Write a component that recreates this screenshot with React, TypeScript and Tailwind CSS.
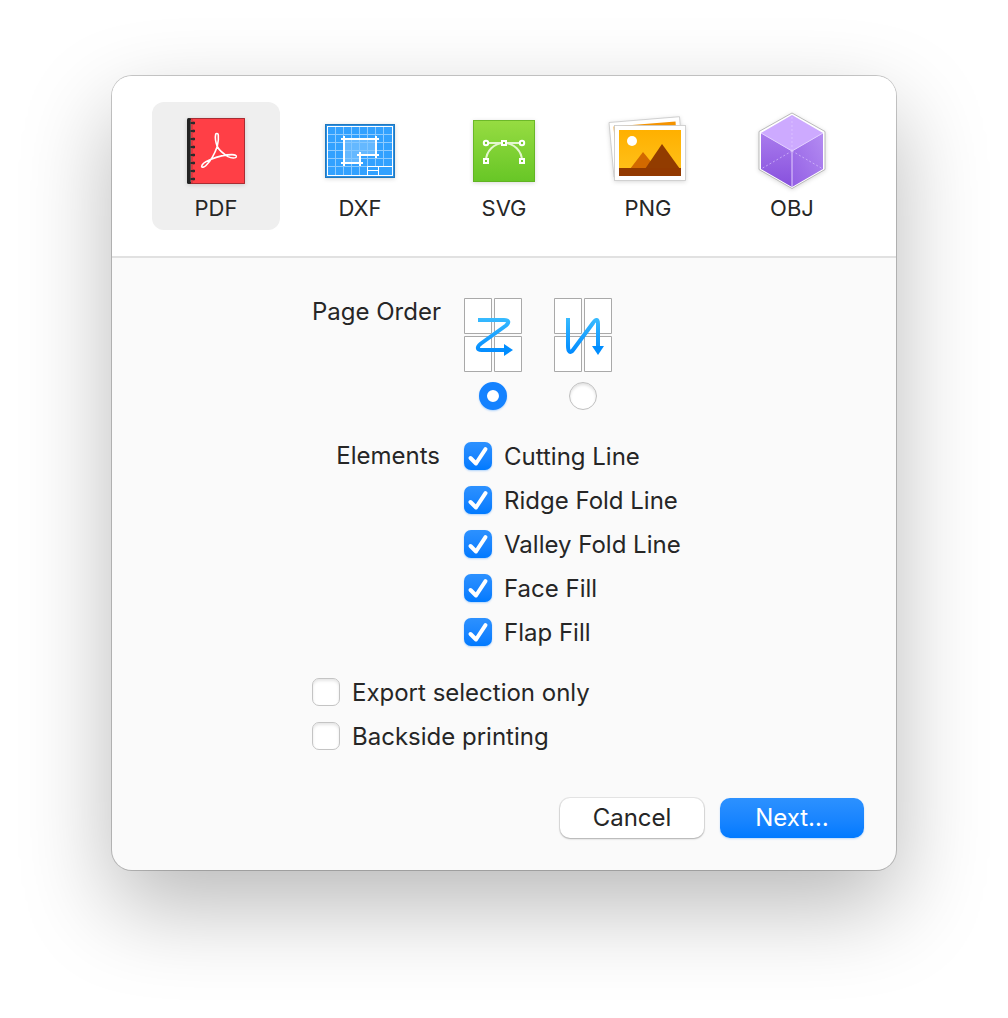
import { useState } from "react";
import type { ReactNode } from "react";

function PdfIcon() {
  const rings = [0, 1, 2, 3, 4, 5, 6, 7];
  return (
    <svg viewBox="176 110 80 80" className="size-20 drop-shadow-sm" aria-hidden="true">
      <rect x="190" y="118" width="55" height="66" fill="#ff3f46" />
      <path d="M190 118.5h54.500v65H190" fill="none" stroke="#a82d33" />
      <path d="M192 119v64" stroke="#b5363b" />
      <rect x="187" y="118" width="4" height="66" rx="1.500" fill="#222" />
      <path d="M190.500 120v62" stroke="#666" strokeWidth=".7" />
      {rings.map((i) => (
        <g key={i}>
          <path d={`M193.500 ${121 + i * 8}v4`} stroke="#b0353a" strokeWidth="2" />
          <path d={`M190.500 ${123 + i * 8}h4.500`} stroke="#2b2b2b" strokeWidth="2" />
        </g>
      ))}
      <path
        d="M217.200 146.500C215.800 142.500 214.900 137.500 215.700 134.300C216 133.100 218 133.100 218.300 134.800C218.700 138 218.300 142.500 217.200 146.500C215 153 210 161.500 206 165.500C204 167.500 201.900 167.600 201.700 166.500C201.500 164.500 205.500 161.500 210.500 159.400C217 156.800 226 154.700 232 154.600C235 154.600 236.800 155.700 236.300 157C235.700 158.400 231.500 158.400 228 156.600C223.500 153.900 219.500 150.500 217.200 146.500Z"
        fill="none"
        stroke="#fff"
        strokeWidth="1.600"
        strokeLinejoin="round"
      />
    </svg>
  );
}

function DxfIcon() {
  return (
    <svg viewBox="320 110 80 80" className="size-20 drop-shadow-sm" aria-hidden="true">
      <rect x="325" y="124" width="70" height="54" fill="#32a1ff" />
      <rect x="325.500" y="124.500" width="69" height="53" fill="none" stroke="#2079c0" />
      <rect x="326.500" y="125.500" width="67" height="51" fill="none" stroke="#2a8ee2" />
      <path
        d="M335.500 127v48M343.500 127v48M351.500 127v48M359.500 127v48M367.500 127v40M375.500 127v40M383.500 127v40M328 134.500h64M328 142.500h64M328 150.500h64M328 158.500h64M328 166.500h40"
        stroke="#8ecbff"
      />
      <path d="M344 139h32v16h-16v8h-16z" fill="#80c5ff" fillOpacity=".65" />
      <rect x="327.500" y="126.500" width="65" height="49" fill="none" stroke="#fff" />
      <path d="M367.500 175.500v-9h25M378.500 166.500v9M367.500 170.500h11" fill="none" stroke="#fff" />
      <path
        d="M341 139h38M344 136v30M376 136v22M357 155h22M360 152v14M341 163h22"
        fill="none"
        stroke="#fff"
        strokeWidth="2"
      />
    </svg>
  );
}

function SvgIcon() {
  return (
    <svg viewBox="464 110 80 80" className="size-20 drop-shadow-sm" aria-hidden="true">
      <defs>
        <linearGradient id="green" x1="0" y1="0" x2="0" y2="1">
          <stop offset="0" stopColor="#97dc42" />
          <stop offset="1" stopColor="#67c626" />
        </linearGradient>
      </defs>
      <rect x="473" y="120" width="62" height="62" fill="url(#green)" />
      <rect x="473.500" y="120.500" width="61" height="61" fill="none" stroke="#5fae22" strokeOpacity=".75" />
      <path d="M486 143h36M486 161a18 18 0 0 1 36 0" fill="none" stroke="#e4f7cf" strokeWidth="2" />
      <g fill="#74cc2c" stroke="#fff" strokeWidth="2">
        <circle cx="486" cy="143" r="2.200" />
        <circle cx="522" cy="143" r="2.200" />
        <rect x="502" y="141" width="4" height="4" />
        <rect x="484" y="159" width="4" height="4" />
        <rect x="520" y="159" width="4" height="4" />
      </g>
    </svg>
  );
}

function PngIcon() {
  return (
    <svg viewBox="608 110 80 80" className="size-20 drop-shadow-sm" aria-hidden="true">
      <defs>
        <linearGradient id="sky" x1="0" y1="0" x2="0" y2="1">
          <stop offset="0" stopColor="#ffb000" />
          <stop offset="1" stopColor="#ffc21c" />
        </linearGradient>
      </defs>
      <path d="M609 122.500L679.500 116.700L684 171L614 177z" fill="#fff" stroke="#c5c5c5" strokeWidth=".8" />
      <path d="M613.500 126.500L675.500 121.500L679 166L617 171z" fill="#f49300" />
      <rect x="614.500" y="125.500" width="71" height="55" fill="#fff" stroke="#c9c9c9" strokeWidth=".8" />
      <rect x="619" y="130" width="62" height="46" fill="url(#sky)" />
      <circle cx="632" cy="141" r="5" fill="#fff" />
      <path d="M630 169l13-17 14 17z" fill="#d26900" />
      <path d="M645 169l17-25 18 25z" fill="#923c00" />
      <path d="M619 168h62v8h-62z" fill="#923900" />
    </svg>
  );
}

function ObjIcon() {
  return (
    <svg viewBox="752 110 80 80" className="size-20 drop-shadow-sm" aria-hidden="true">
      <defs>
        <linearGradient id="cubeLeft" x1="0" y1="0" x2="0" y2="1">
          <stop offset="0" stopColor="#a97bed" />
          <stop offset="1" stopColor="#8750dd" />
        </linearGradient>
        <linearGradient id="cubeRight" x1="1" y1="0" x2="0" y2="1">
          <stop offset="0" stopColor="#b48cf2" />
          <stop offset="1" stopColor="#935fe4" />
        </linearGradient>
      </defs>
      <path d="M792 113L825 131.500V169.500L792 188.500L759 169.500V131.500z" fill="#fff" stroke="#aaa" strokeWidth=".8" />
      <path d="M792 115L823 133L792 151L761 133z" fill="#cdaaff" />
      <path d="M761 133L792 151V187L761 169z" fill="url(#cubeLeft)" />
      <path d="M823 133L792 151V187L823 169z" fill="url(#cubeRight)" />
      <path d="M761 133L792 151L823 133M792 151V187" fill="none" stroke="#e3d0ff" />
      <path
        d="M792 151V115M792 151L761 169M792 151L823 169"
        fill="none"
        stroke="#e3d0ff"
        strokeOpacity=".6"
        strokeDasharray="2 2"
      />
    </svg>
  );
}

function PageGrid({ children }: { children: ReactNode }) {
  return (
    <svg viewBox="0 0 58 76" className="h-[76px] w-[58px]" aria-hidden="true">
      <defs>
        <linearGradient id="flow" gradientUnits="userSpaceOnUse" x1="0" y1="20" x2="0" y2="56">
          <stop offset="0" stopColor="#38bbff" />
          <stop offset="1" stopColor="#008aff" />
        </linearGradient>
      </defs>
      <path
        d="M.5.5h27v35H.5zM30.500.5h27v35h-27zM.5 38.500h27v35H.5zM30.500 38.500h27v35h-27z"
        fill="#fff"
        stroke="#a9a9a9"
      />
      {children}
    </svg>
  );
}

function AcrossIcon() {
  return (
    <PageGrid>
      <path
        d="M14 22H40C45 22 45.500 24.500 42 27.500L17 45.500C12.500 49 13 52 17.500 52H41"
        fill="none"
        stroke="url(#flow)"
        strokeWidth="4"
      />
      <path d="M40 46l9 6-9 6z" fill="#008dff" />
    </PageGrid>
  );
}

function DownIcon() {
  return (
    <PageGrid>
      <path
        d="M14 20V48C14 54 16.500 55.500 19 52L39 25C42 20.500 44 21 44 26V49"
        fill="none"
        stroke="url(#flow)"
        strokeWidth="4"
      />
      <path d="M38 48h12l-6 9z" fill="#008dff" />
    </PageGrid>
  );
}

function Check({ label, defaultChecked = false }: { label: string; defaultChecked?: boolean }) {
  return (
    <label className="flex h-7 items-center gap-3">
      <span className="grid size-7 shrink-0 place-items-center">
        <input
          type="checkbox"
          defaultChecked={defaultChecked}
          className="peer col-start-1 row-start-1 size-7 appearance-none rounded-[7px] border border-[#c4c4c4] bg-white shadow-[inset_0_2px_3px_rgba(0,0,0,0.1)] checked:border-0 checked:bg-linear-to-b checked:from-[#2c91ff] checked:to-[#007aff] checked:shadow-[0_1px_2px_rgba(0,122,255,0.3)]"
        />
        <svg
          viewBox="0 0 28 28"
          className="pointer-events-none invisible z-10 col-start-1 row-start-1 size-7 peer-checked:visible"
          aria-hidden="true"
        >
          <path
            d="M6.500 16L12 21.500L21.500 7.200"
            fill="none"
            stroke="#fff"
            strokeWidth="4"
            strokeLinecap="round"
            strokeLinejoin="round"
          />
        </svg>
      </span>
      <span className="whitespace-nowrap pt-px">{label}</span>
    </label>
  );
}

const formats = [
  { name: "PDF", icon: <PdfIcon /> },
  { name: "DXF", icon: <DxfIcon /> },
  { name: "SVG", icon: <SvgIcon /> },
  { name: "PNG", icon: <PngIcon /> },
  { name: "OBJ", icon: <ObjIcon /> },
];

const orders = [
  { name: "Across, then down", icon: <AcrossIcon /> },
  { name: "Down, then across", icon: <DownIcon /> },
];

const elements = ["Cutting Line", "Ridge Fold Line", "Valley Fold Line", "Face Fill", "Flap Fill"];

export default function App() {
  const [format, setFormat] = useState("PDF");
  return (
    <main className="min-h-screen bg-white px-4 pt-[76px] pb-[148px] font-['Inter',sans-serif] text-2xl leading-7 text-[#262626]">
      <section
        role="dialog"
        aria-label="Export"
        className="mx-auto w-full max-w-[784px] overflow-hidden rounded-[20px] bg-[#fafafa] shadow-[0_0_0_1px_rgba(0,0,0,0.2),0_36px_90px_rgba(0,0,0,0.28)]"
      >
        <div
          role="tablist"
          aria-label="Format"
          className="flex flex-wrap gap-4 border-b-2 border-[#e1e1e1] bg-white px-10 py-[26px]"
        >
          {formats.map((f) => (
            <button
              key={f.name}
              type="button"
              role="tab"
              aria-selected={format === f.name}
              onClick={() => setFormat(f.name)}
              className="flex h-32 w-32 flex-col items-center gap-1 rounded-xl pt-2 text-[22px] leading-7 aria-selected:bg-[#efefef]"
            >
              {f.icon}
              {f.name}
            </button>
          ))}
        </div>
        <form className="px-8 pt-10 pb-8" onSubmit={(e) => e.preventDefault()}>
          <div className="mx-auto grid w-96 grid-cols-[128px_1fr] gap-x-6 gap-y-8">
            <span id="order" className="whitespace-nowrap text-right">
              Page Order
            </span>
            <div role="radiogroup" aria-labelledby="order" className="flex gap-8">
              {orders.map((o, i) => (
                <label key={o.name} className="flex flex-col items-center gap-2">
                  {o.icon}
                  <input
                    type="radio"
                    name="order"
                    aria-label={o.name}
                    defaultChecked={i === 0}
                    className="size-7 appearance-none rounded-full border border-[#c0c0c0] bg-white shadow-[inset_0_2px_3px_rgba(0,0,0,0.12)] checked:border-8 checked:border-[#1482ff] checked:shadow-[0_1px_2px_rgba(0,122,255,0.3)]"
                  />
                </label>
              ))}
            </div>
            <span id="elements" className="text-right">
              Elements
            </span>
            <div role="group" aria-labelledby="elements" className="flex flex-col gap-4">
              {elements.map((e) => (
                <Check key={e} label={e} defaultChecked />
              ))}
            </div>
            <div className="col-span-2 flex flex-col gap-4">
              <Check label="Export selection only" />
              <Check label="Backside printing" />
            </div>
          </div>
          <div className="mt-12 flex justify-end gap-4">
            <button
              type="button"
              className="h-10 w-36 rounded-[10px] bg-white shadow-[0_0_0_1px_rgba(0,0,0,0.08),0_1px_2px_rgba(0,0,0,0.25)]"
            >
              Cancel
            </button>
            <button
              type="submit"
              className="h-10 w-36 rounded-[10px] bg-linear-to-b from-[#2c91ff] to-[#007aff] text-white shadow-[0_1px_2px_rgba(0,122,255,0.25)]"
            >
              Next…
            </button>
          </div>
        </form>
      </section>
    </main>
  );
}
